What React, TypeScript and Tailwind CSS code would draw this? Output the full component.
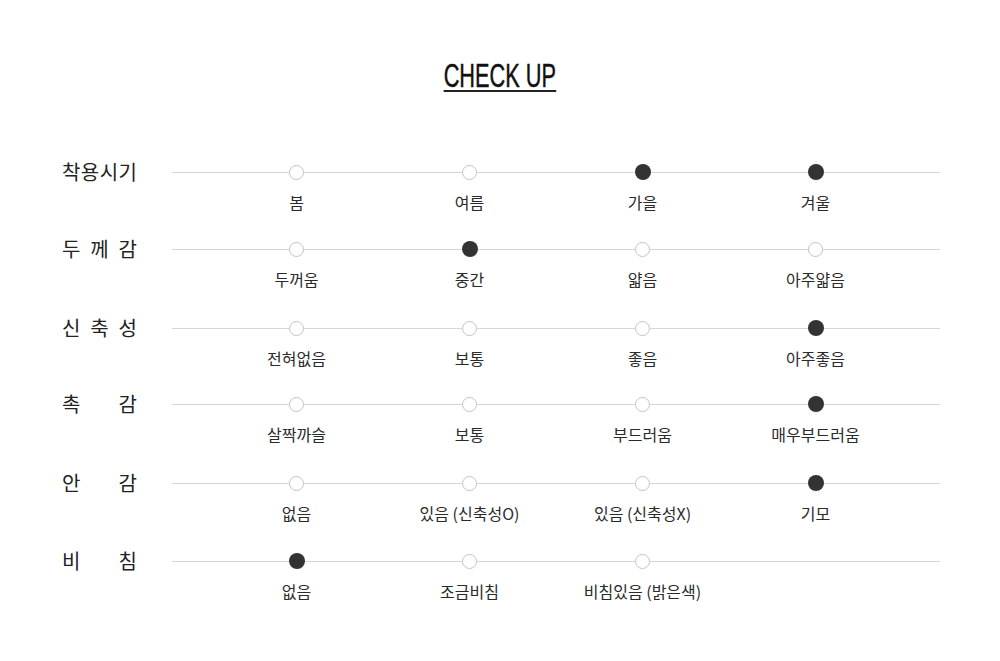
import React from "react";

const rows = [
  { h: 77, label: ["착", "용", "시", "기"], opts: ["봄", "여름", "가을", "겨울"], sel: [2, 3] },
  { h: 79, label: ["두", "께", "감"], opts: ["두꺼움", "중간", "얇음", "아주얇음"], sel: [1] },
  { h: 76, label: ["신", "축", "성"], opts: ["전혀없음", "보통", "좋음", "아주좋음"], sel: [3] },
  { h: 79, label: ["촉", "감"], opts: ["살짝까슬", "보통", "부드러움", "매우부드러움"], sel: [3] },
  { h: 78, label: ["안", "감"], opts: ["없음", "있음 (신축성O)", "있음 (신축성X)", "기모"], sel: [3] },
  { h: 78, label: ["비", "침"], opts: ["없음", "조금비침", "비침있음 (밝은색)"], sel: [0] },
];

const kr = { fontFamily: '"Noto Sans CJK KR", "Noto Sans", sans-serif' } as React.CSSProperties;

export default function App() {
  return (
    <div className="w-[1000px] h-[661px] bg-white overflow-hidden" style={kr}>
      <div className="flex justify-center pt-[53px] h-[164px]">
        <div
          className="inline-block h-[39px] border-b-2 border-[#222] scale-x-[0.64] origin-center text-[34px] leading-[44px] text-[#111] [-webkit-text-stroke:0.45px_#111]"
          style={{ fontFamily: '"Liberation Sans", sans-serif' }}
        >
          CHECK UP
        </div>
      </div>
      <div className="flex flex-col">
        {rows.map((r, i) => (
          <div key={i} className="flex flex-col" style={{ height: r.h }}>
            <div className="flex h-4 items-center">
              <div className="w-[172px] pl-[62px] shrink-0">
                <div className="w-[75px] flex justify-between text-[20px] leading-4 text-[#222]">
                  {r.label.map((c, j) => (
                    <span key={j}>{c}</span>
                  ))}
                </div>
              </div>
              <div className="relative w-[768px] h-4 px-[38px] grid grid-cols-4">
                <div className="absolute left-0 right-0 top-[7.5px] h-px bg-[#d6d6d6]" />
                {r.opts.map((_, j) => (
                  <div key={j} className="relative flex justify-center items-center">
                    {r.sel.includes(j) ? (
                      <div className="w-4 h-4 rounded-full bg-[#333]" />
                    ) : (
                      <div className="w-[15px] h-[15px] rounded-full bg-white border border-[#c4c4c4]" />
                    )}
                  </div>
                ))}
              </div>
            </div>
            <div className="flex mt-[12px]">
              <div className="w-[172px] shrink-0" />
              <div className="w-[768px] px-[38px] grid grid-cols-4">
                {r.opts.map((o, j) => (
                  <div key={j} className="text-center text-[16px] leading-5 text-[#2a2a2a] whitespace-nowrap">
                    {o}
                  </div>
                ))}
              </div>
            </div>
          </div>
        ))}
      </div>
    </div>
  );
}
